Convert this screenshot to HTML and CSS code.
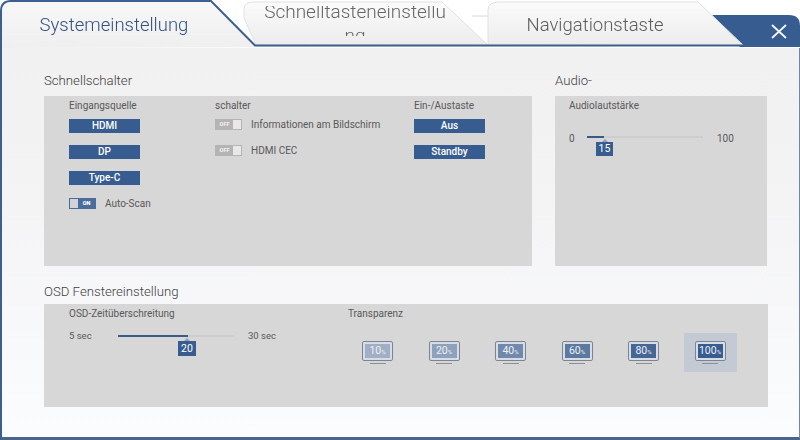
FILE: index.html
```html
<!DOCTYPE html>
<html lang="de">
<head>
<meta charset="utf-8">
<title>Systemeinstellung</title>
<link rel="stylesheet" href="styles.css">
</head>
<body>
<div class="window">
  <header class="header">
    <svg class="header-bg" width="800" height="48" viewBox="0 0 800 48">
      <defs>
        <linearGradient id="tabgrad" x1="0" y1="0" x2="0" y2="1">
          <stop offset="0" stop-color="#fbfbfb"/>
          <stop offset="1" stop-color="#ececec"/>
        </linearGradient>
        <linearGradient id="activegrad" x1="0" y1="0" x2="0" y2="1">
          <stop offset="0" stop-color="#f7f7f7"/>
          <stop offset="1" stop-color="#efefef"/>
        </linearGradient>
      </defs>
      <path d="M712 15H789Q800 15 800 26V47H740Z" fill="#375c8f"/>
      <path d="M472 16H492" stroke="#d8d8d8" fill="none"/>
      <path d="M488 45V10Q488 2 499 2H698L743 45Z" fill="url(#tabgrad)" stroke="#dfe1e4"/>
      <path d="M244 18V9Q244 2 254 2H442L488 45H256Z" fill="url(#tabgrad)" stroke="#dfe1e4"/>
      <path d="M1 48V11Q1 1 11 1H211L255 45.500H800" fill="url(#activegrad)" stroke="#3d5f8f" stroke-width="2"/>
      <path d="M2 48V12Q2 2 12 2H210L254 47H2Z" fill="url(#activegrad)"/>
      <path d="M772 25L786 38M786 25L772 38" stroke="#f4f6fa" stroke-width="1.800" fill="none"/>
    </svg>
    <div class="tab tab-active">Systemeinstellung</div>
    <div class="tab tab-keys"><span class="tab-keys-text">Schnelltasteneinstellung</span></div>
    <div class="tab tab-nav">Navigationstaste</div>
  </header>

  <main class="content">
    <div class="top-row">
      <section class="group group-quick">
        <h2 class="group-title">Schnellschalter</h2>
        <div class="panel quick-panel">
          <div class="col col-input">
            <div class="label">Eingangsquelle</div>
            <div class="btn">HDMI</div>
            <div class="btn">DP</div>
            <div class="btn">Type-C</div>
            <div class="toggle-row">
              <span class="toggle toggle-on"><i class="knob"></i><b>ON</b></span>
              <span class="text">Auto-Scan</span>
            </div>
          </div>
          <div class="col col-switch">
            <div class="label">schalter</div>
            <div class="toggle-row">
              <span class="toggle toggle-off"><b>OFF</b><i class="knob"></i></span>
              <span class="text">Informationen am Bildschirm</span>
            </div>
            <div class="toggle-row">
              <span class="toggle toggle-off"><b>OFF</b><i class="knob"></i></span>
              <span class="text">HDMI CEC</span>
            </div>
          </div>
          <div class="col col-power">
            <div class="label">Ein-/Austaste</div>
            <div class="btn">Aus</div>
            <div class="btn">Standby</div>
          </div>
        </div>
      </section>
      <section class="group group-audio">
        <h2 class="group-title">Audio-</h2>
        <div class="panel audio-panel">
          <div class="label">Audiolautstärke</div>
          <div class="slider-row audio-slider">
            <span class="text min">0</span>
            <div class="track"><div class="fill" style="width:15%"></div><span class="badge" style="left:9px">15</span></div>
            <span class="text">100</span>
          </div>
        </div>
      </section>
    </div>

    <section class="group group-osd">
      <h2 class="group-title">OSD Fenstereinstellung</h2>
      <div class="panel osd-panel">
        <div class="osd-time">
          <div class="label">OSD-Zeitüberschreitung</div>
          <div class="slider-row osd-slider">
            <span class="text min">5 sec</span>
            <div class="track"><div class="fill" style="width:60%"></div><span class="badge badge-tall" style="left:60px">20</span></div>
            <span class="text">30 sec</span>
          </div>
        </div>
        <div class="osd-trans">
          <div class="label">Transparenz</div>
          <div class="monitors">
            <div class="mon-cell"><div class="mon"><div class="screen s10">10<small>%</small></div></div><div class="stand"></div></div>
            <div class="mon-cell"><div class="mon"><div class="screen s20">20<small>%</small></div></div><div class="stand"></div></div>
            <div class="mon-cell"><div class="mon"><div class="screen s40">40<small>%</small></div></div><div class="stand"></div></div>
            <div class="mon-cell"><div class="mon"><div class="screen s60">60<small>%</small></div></div><div class="stand"></div></div>
            <div class="mon-cell"><div class="mon"><div class="screen s80">80<small>%</small></div></div><div class="stand"></div></div>
            <div class="mon-cell selected"><div class="mon"><div class="screen s100">100<small>%</small></div></div><div class="stand"></div></div>
          </div>
        </div>
      </div>
    </section>
  </main>
</div>
</body>
</html>
```
FILE: styles.css
```css
* { box-sizing: border-box; }
html, body { margin: 0; padding: 0; }
body {
  width: 800px;
  height: 440px;
  overflow: hidden;
  background: #fff;
  font-family: Roboto, "Open Sans", sans-serif;
  color: #4a4a4a;
}
.window {
  position: relative;
  width: 800px;
  height: 440px;
  display: flex;
  flex-direction: column;
  border-left: 2px solid #3d5f8f;
  border-bottom: 3px solid #47658f;
  border-right: 1px solid #6f86a8;
  background: linear-gradient(#f0f0f0 0, #f3f3f4 40%, #fbfcfe 100%);
  filter: blur(0.4px);
}
.header {
  position: relative;
  height: 48px;
  margin-left: -2px;
  margin-right: -1px;
  display: flex;
  flex: none;
  background: #fff;
}
.header-bg { position: absolute; left: 0; top: 0; }
.tab { position: relative; text-align: center; }
.tab-active {
  width: 244px;
  padding: 10px 16px 0 0;
  font-size: 18.500px;
  font-weight: 300;
  line-height: 30px;
  color: #33507f;
}
.tab-keys {
  width: 228px;
  margin-top: 6px;
  height: 30px;
  overflow: hidden;
  padding-right: 6px;
  font-size: 19px;
  font-weight: 300;
  color: #666;
}
.tab-keys-text {
  display: block;
  width: 184px;
  margin: -6px auto 0;
  line-height: 24px;
  word-break: break-all;
}
.tab-nav {
  margin-left: 14px;
  width: 250px;
  padding: 10px 32px 0 0;
  font-size: 18.500px;
  font-weight: 300;
  line-height: 30px;
  color: #5c5c5c;
}
.content {
  flex: 1;
  display: flex;
  flex-direction: column;
  padding: 24px 31px 0 42px;
}
.top-row { display: flex; gap: 23px; }
.group-title {
  margin: 0;
  font-size: 13.200px;
  font-weight: 300;
  line-height: 18px;
  color: #3f3f3f;
}
.panel {
  margin-top: 6px;
  background: #d7d7d7;
}
.group-quick { width: 488px; }
.group-audio { width: 212px; }
.quick-panel {
  height: 170px;
  display: flex;
  padding: 3px 0 0 25px;
}
.label {
  font-size: 10px;
  line-height: 13px;
  color: #595959;
}
.text {
  font-size: 10px;
  line-height: 13px;
  color: #595959;
  white-space: nowrap;
}
.col { display: flex; flex-direction: column; }
.col-input { width: 146px; }
.col-switch { width: 199px; }
.col-power { width: 71px; }
.btn {
  width: 71px;
  height: 14px;
  margin: 7px 0 5px;
  background: #375c8f;
  color: #fff;
  font-size: 10px;
  font-weight: 500;
  line-height: 14px;
  text-align: center;
}
.toggle-row {
  display: flex;
  align-items: center;
  gap: 9px;
  height: 12px;
}
.col-input .toggle-row { margin-top: 7px; }
.col-switch .toggle-row { margin-top: 6px; margin-bottom: 8px; }
.toggle {
  width: 27px;
  height: 11px;
  display: flex;
  align-items: center;
  flex: none;
  padding: 1px;
}
.toggle b {
  flex: 1;
  text-align: center;
  font-size: 5.500px;
  line-height: 9px;
  font-weight: 900;
}
.knob { width: 8px; height: 9px; background: #e8e8e8; display: block; }
.toggle-on { background: #4c6d9c; color: #fff; }
.toggle-on .knob { background: #d0d4da; }
.toggle-off { background: #b4b4b4; color: #f0f0f0; }
.audio-panel {
  height: 170px;
  padding: 3px 0 0 14px;
}
.slider-row { display: flex; align-items: center; }
.track {
  position: relative;
  width: 116px;
  height: 2px;
  background: #cdcdcd;
  flex: none;
}
.fill { height: 100%; background: #3a5a88; }
.badge {
  position: absolute;
  top: 6px;
  width: 17px;
  height: 14px;
  background: #375c8f;
  color: #fff;
  font-size: 10.500px;
  font-weight: 400;
  line-height: 14px;
  text-align: center;
}
.badge::before {
  content: "";
  position: absolute;
  left: 50%;
  top: -3px;
  margin-left: -3px;
  border-left: 3px solid transparent;
  border-right: 3px solid transparent;
  border-bottom: 3px solid #8fa3bf;
}
.badge-tall { width: 18px; height: 15px; line-height: 15px; }
.audio-slider { margin-top: 20px; }
.audio-slider .min { width: 18px; }
.audio-slider .track { margin-right: 14px; margin-bottom: 4px; }
.group-osd { margin-top: 17px; }
.osd-panel {
  margin-top: 3px;
  height: 103px;
  display: flex;
  padding: 3px 0 0 25px;
}
.osd-time { width: 279px; }
.osd-slider { margin-top: 9px; }
.osd-slider .text { font-size: 9.500px; }
.osd-slider .min { width: 49px; }
.osd-slider .track { margin-right: 14px; }
.osd-trans { flex: 1; }
.monitors {
  display: flex;
  margin-top: 13px;
  margin-left: 3px;
  gap: 13.500px;
}
.mon-cell {
  width: 53px;
  height: 39px;
  display: flex;
  flex-direction: column;
  align-items: center;
  padding-top: 8px;
}
.selected { background: #c3cad4; }
.mon {
  width: 31px;
  height: 20px;
  border: 1px solid #7a8594;
  border-radius: 2px;
  padding: 2px;
  background: #d9dde3;
}
.screen {
  height: 14px;
  color: #eef1f6;
  font-size: 10.500px;
  line-height: 14px;
  text-align: center;
  white-space: nowrap;
}
.screen small { font-size: 6px; }
.stand { width: 16px; height: 1px; margin-top: 2px; background: #8b8f96; }
.s10 { background: #a0afc5; }
.s20 { background: #8ea1bc; }
.s40 { background: #7089ac; }
.s60 { background: #5c79a2; }
.s80 { background: #456795; }
.s100 { background: #375c8f; }
```
